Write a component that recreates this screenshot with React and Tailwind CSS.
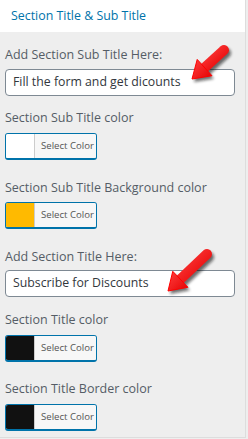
import React from 'react';

const font = { fontFamily: '"Open Sans", "Noto Sans", Arial, sans-serif' };

// Red pointer arrow drawn over the panel, computed from tail and tip points
const Arrow = ({ id, tail, tip }) => {
  const dx = tip[0] - tail[0];
  const dy = tip[1] - tail[1];
  const len = Math.hypot(dx, dy);
  const ux = dx / len;
  const uy = dy / len;
  const headLen = 17;
  const half = 11;
  const bx = tip[0] - ux * headLen;
  const by = tip[1] - uy * headLen;
  const l = [bx - uy * half, by + ux * half];
  const r = [bx + uy * half, by - ux * half];
  const pts = `${tip[0]},${tip[1]} ${l[0]},${l[1]} ${r[0]},${r[1]}`;
  const shaftEnd = [bx + ux * 2, by + uy * 2];
  return (
    <svg className="absolute left-0 top-0 pointer-events-none" width="248" height="439" viewBox="0 0 248 439">
      <defs>
        <linearGradient id={`g${id}`} x1="0" y1="0" x2="1" y2="1">
          <stop offset="0" stopColor="#ff4040" />
          <stop offset="1" stopColor="#e40000" />
        </linearGradient>
        <filter id={`s${id}`} x="-50%" y="-50%" width="200%" height="200%">
          <feGaussianBlur stdDeviation="1.5" />
        </filter>
      </defs>
      <g transform="translate(2,3)" opacity="0.6" filter={`url(#s${id})`}>
        <line x1={tail[0]} y1={tail[1]} x2={shaftEnd[0]} y2={shaftEnd[1]} stroke="#111" strokeWidth="10" strokeLinecap="round" />
        <polygon points={pts} fill="#111" />
      </g>
      <line x1={tail[0]} y1={tail[1]} x2={shaftEnd[0]} y2={shaftEnd[1]} stroke={`url(#g${id})`} strokeWidth="10" strokeLinecap="round" />
      <polygon points={pts} fill={`url(#g${id})`} stroke="#f00" strokeWidth="1" strokeLinejoin="round" />
    </svg>
  );
};

const Label = ({ children, className = '' }) => (
  <div className={`text-[12.5px] leading-5 text-[#555d66] whitespace-nowrap ${className}`}>{children}</div>
);

const TextInput = ({ value, className = '' }) => (
  <div className={`w-[230px] h-[27px] bg-white border border-[#7e8993] rounded-[4px] flex items-center pl-[7px] text-[12.3px] text-[#32373c] whitespace-nowrap ${className}`}>
    {value}
  </div>
);

const ColorButton = ({ color, className = '' }) => (
  <div className={`w-[92px] h-[27px] flex rounded-[3px] overflow-hidden border border-[#0073aa] border-b-2 ${className}`}>
    <div className="w-[28px] h-full" style={{ backgroundColor: color }} />
    <div className="flex-1 bg-[#f7f7f7] border-l border-[#ccc] flex items-center pl-[6px] text-[9.6px] text-[#555] whitespace-nowrap">
      Select Color
    </div>
  </div>
);

export default function App() {
  return (
    <div className="relative w-[248px] h-[439px] bg-[#eee] overflow-hidden" style={font}>
      <div className="w-[246px] h-[438px] border-r border-b border-[#ddd] flex flex-col">
        <div className="h-8 bg-white flex items-center pl-[11px] text-[12.4px] text-[#0073aa]">
          Section Title &amp; Sub Title
        </div>
        <div className="pl-[5px] flex flex-col">
          <Label className="mt-[13px]">Add Section Sub Title Here:</Label>
          <TextInput className="mt-1" value="Fill the form and get dicounts" />

          <Label className="mt-3">Section Sub Title color</Label>
          <ColorButton className="mt-[5px]" color="#ffffff" />

          <Label className="mt-[18px]">Section Sub Title Background color</Label>
          <ColorButton className="mt-1" color="#ffba00" />

          <Label className="mt-[18px]">Add Section Title Here:</Label>
          <TextInput className="mt-[3px] h-[26px]" value="Subscribe for Discounts" />

          <Label className="mt-[13px]">Section Title color</Label>
          <ColorButton className="mt-[5px]" color="#111111" />

          <Label className="mt-[17px]">Section Title Border color</Label>
          <ColorButton className="mt-[5px]" color="#111111" />
        </div>
      </div>
      <Arrow id="a1" tail={[224, 50]} tip={[192, 79]} />
      <Arrow id="a2" tail={[207, 254]} tip={[168, 291]} />
    </div>
  );
}
